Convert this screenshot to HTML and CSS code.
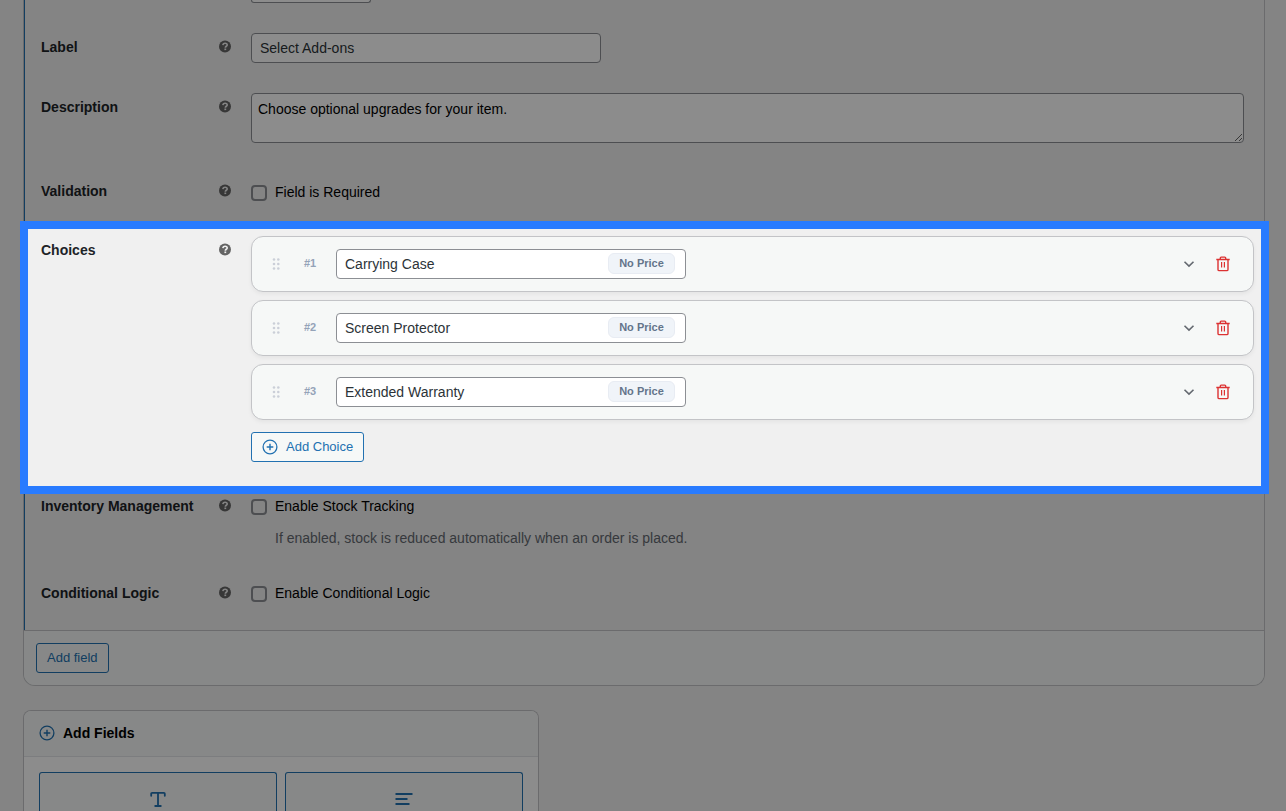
FILE: index.html
```
<!DOCTYPE html>
<html lang="en">
<head>
    <meta charset="UTF-8">
    <meta name="viewport" content="width=device-width, initial-scale=1.0">
    <title>Edit Product Fields</title>
    <link rel="stylesheet" href="styles.css">
</head>
<body>
    <svg class="sprite" width="0" height="0">
        <symbol id="help" viewBox="0 0 13 13">
            <circle cx="6" cy="6.5" r="6" fill="#646464"/>
            <path d="M3.9 5.1C4 3.8 4.8 3.2 6.1 3.2c1.3 0 2.1.7 2.1 1.7 0 1.3-1.9 1.4-1.9 2.8" fill="none" stroke="#f0f0f0" stroke-width="1.6"/>
            <rect x="5.4" y="8.5" width="1.8" height="1.6" fill="#f0f0f0"/>
        </symbol>
        <symbol id="grip" viewBox="0 0 8 14">
            <g fill="#cbcfd8">
                <circle cx="2" cy="2.5" r="1.3"/><circle cx="6.3" cy="2.5" r="1.3"/>
                <circle cx="2" cy="7" r="1.3"/><circle cx="6.3" cy="7" r="1.3"/>
                <circle cx="2" cy="11.5" r="1.3"/><circle cx="6.3" cy="11.5" r="1.3"/>
            </g>
        </symbol>
        <symbol id="chevron" viewBox="0 0 12 12">
            <path d="M1.5 3.7 6 8.1 10.5 3.7" fill="none" stroke="#646970" stroke-width="1.6"/>
        </symbol>
        <symbol id="trash" viewBox="0 0 14 16">
            <path d="M.3 3.5h13.4M4.3 3.3V2c0-.6.3-.9.9-.9h3.6c.6 0 .9.3.9.9v1.3M2 4v9.4c0 .8.5 1.2 1.2 1.2h7.6c.7 0 1.2-.4 1.2-1.2V4" fill="none" stroke="#dc3232" stroke-width="1.4"/>
            <path d="M5.6 6v5.6M8.4 6v5.6" fill="none" stroke="#dc3232" stroke-width="1.2"/>
        </symbol>
        <symbol id="plus" viewBox="0 0 16 16">
            <circle cx="8" cy="8" r="6.9" fill="none" stroke="#2271b1" stroke-width="1.3"/>
            <path d="M8 4.7v6.6M4.7 8h6.6" stroke="#2271b1" stroke-width="1.4"/>
        </symbol>
    </svg>

    <main class="page">
        <section class="panel">
            <div class="fields">
                <div class="row row-type">
                    <div class="control"><div class="select"></div></div>
                </div>
                <div class="row row-label">
                    <div class="label">Label <svg class="help"><use href="#help"/></svg></div>
                    <div class="control"><input type="text" class="text-input" value="Select Add-ons"></div>
                </div>
                <div class="row row-description">
                    <div class="label">Description <svg class="help"><use href="#help"/></svg></div>
                    <div class="control"><textarea class="textarea">Choose optional upgrades for your item.</textarea></div>
                </div>
                <div class="row row-validation">
                    <div class="label">Validation <svg class="help"><use href="#help"/></svg></div>
                    <label class="check"><input type="checkbox">Field is Required</label>
                </div>
                <div class="row row-choices">
                    <div class="label">Choices <svg class="help"><use href="#help"/></svg></div>
                    <div class="choices">
                        <div class="choice">
                            <svg class="grip"><use href="#grip"/></svg>
                            <span class="number">#1</span>
                            <div class="choice-name"><input type="text" value="Carrying Case"><span class="price">No Price</span></div>
                            <svg class="chevron"><use href="#chevron"/></svg>
                            <svg class="trash"><use href="#trash"/></svg>
                        </div>
                        <div class="choice">
                            <svg class="grip"><use href="#grip"/></svg>
                            <span class="number">#2</span>
                            <div class="choice-name"><input type="text" value="Screen Protector"><span class="price">No Price</span></div>
                            <svg class="chevron"><use href="#chevron"/></svg>
                            <svg class="trash"><use href="#trash"/></svg>
                        </div>
                        <div class="choice">
                            <svg class="grip"><use href="#grip"/></svg>
                            <span class="number">#3</span>
                            <div class="choice-name"><input type="text" value="Extended Warranty"><span class="price">No Price</span></div>
                            <svg class="chevron"><use href="#chevron"/></svg>
                            <svg class="trash"><use href="#trash"/></svg>
                        </div>
                        <button type="button" class="button add-choice"><svg class="plus"><use href="#plus"/></svg>Add Choice</button>
                    </div>
                    <div class="spotlight"></div>
                </div>
                <div class="row row-inventory">
                    <div class="label">Inventory Management <svg class="help"><use href="#help"/></svg></div>
                    <div class="control">
                        <label class="check"><input type="checkbox">Enable Stock Tracking</label>
                        <p class="hint">If enabled, stock is reduced automatically when an order is placed.</p>
                    </div>
                </div>
                <div class="row row-logic">
                    <div class="label">Conditional Logic <svg class="help"><use href="#help"/></svg></div>
                    <label class="check"><input type="checkbox">Enable Conditional Logic</label>
                </div>
            </div>
            <div class="panel-footer">
                <button type="button" class="button">Add field</button>
            </div>
        </section>

        <section class="add-fields">
            <h2><svg class="plus"><use href="#plus"/></svg>Add Fields</h2>
            <div class="field-types">
                <button type="button" class="field-type">
                    <svg width="16" height="17" viewBox="0 0 16 17"><path d="M1.2 4.8V2.8c0-.6.3-.9.9-.9h11.8c.6 0 .9.3.9.9v2M8 1.9v13M5.2 15h5.6" fill="none" stroke="#2271b1" stroke-width="1.8" stroke-linecap="round"/></svg>
                </button>
                <button type="button" class="field-type">
                    <svg width="18" height="17" viewBox="0 0 18 17"><path d="M.5 3h17M.5 8h12M.5 13h14" fill="none" stroke="#2271b1" stroke-width="2"/></svg>
                </button>
            </div>
        </section>
    </main>
</body>
</html>
```
FILE: styles.css
```
* {
    box-sizing: border-box;
}
body {
    margin: 0;
    background-color: #f0f0f0;
    font-family: "Liberation Sans", Arial, sans-serif;
    font-size: 14px;
    line-height: 20px;
    color: #000;
}
.sprite {
    display: block;
}
input,
textarea,
button {
    font-family: inherit;
    font-size: 14px;
    margin: 0;
}
svg {
    display: block;
    flex: none;
}
.page {
    height: 811px;
    padding: 0 21px 0 23px;
    overflow: hidden;
}
.panel {
    border: 1px solid #c3c4c7;
    border-top: none;
    border-radius: 0 0 12px 12px;
}
.fields {
    height: 630px;
    border-left: 1px solid #2271b1;
    padding-left: 16px;
}
.row {
    display: flex;
}
.row-type {
    height: 33px;
    padding-left: 210px;
}
.row-label {
    height: 60px;
}
.row-description {
    height: 88px;
}
.row-validation {
    height: 48px;
}
.row-choices {
    position: relative;
    height: 257px;
    padding-top: 7px;
}
.row-inventory {
    height: 97px;
    padding-top: 10px;
}
.label {
    display: flex;
    justify-content: space-between;
    width: 190px;
    margin-right: 20px;
    padding-top: 4px;
    font-weight: bold;
    color: #1d2327;
}
.row-validation .label,
.row-inventory .label,
.row-logic .label {
    padding-top: 0;
}
.row-validation .check {
    margin-top: 1px;
}
.help {
    width: 13px;
    height: 13px;
    margin: 3px -0.5px 0 0;
}
.control {
    flex: 1;
}
.select {
    width: 120px;
    height: 3px;
    border: 1px solid #8c8f94;
    border-top: none;
    border-radius: 0 0 3px 3px;
    background-color: #fff;
}
.text-input,
.choice-name input {
    display: block;
    width: 350px;
    height: 30px;
    padding: 0 8px;
    border: 1px solid #8c8f94;
    border-radius: 4px;
    background-color: #fff;
    color: #2c3338;
}
.textarea {
    display: block;
    width: 993px;
    height: 50px;
    padding: 5px 6px;
    border: 1px solid #8c8f94;
    border-radius: 4px;
    background-color: #fff;
    line-height: 20px;
    color: #000;
}
.check {
    display: flex;
    align-items: flex-start;
    height: 20px;
}
.check input {
    appearance: none;
    width: 16px;
    height: 16px;
    margin: 3px 8px 0 0;
    border: 2px solid #8c8f94;
    border-radius: 4px;
}
.hint {
    margin: 12px 0 0 24px;
    color: #646970;
}
.choices {
    width: 1003px;
}
.choice {
    display: flex;
    align-items: center;
    height: 56px;
    margin-bottom: 8px;
    padding: 0 23px 0 20px;
    border: 1px solid #c3c4c7;
    border-radius: 12px;
    background-color: #f6f8f7;
    box-shadow: 0 2px 4px rgba(0, 0, 0, 0.05);
}
.grip {
    width: 8px;
    height: 14px;
}
.number {
    width: 32px;
    margin: -2px 0 0 24px;
    font-size: 11px;
    font-weight: bold;
    color: #94a3b8;
}
.choice-name {
    position: relative;
    margin-right: auto;
}
.price {
    position: absolute;
    top: 4px;
    right: 11px;
    width: 67px;
    height: 21px;
    border: 1px solid #e8ecf3;
    border-radius: 6px;
    background-color: #f0f4f9;
    font-size: 11px;
    line-height: 19px;
    font-weight: bold;
    text-align: center;
    color: #64748b;
}
.chevron {
    width: 12px;
    height: 12px;
    margin-right: 21px;
}
.trash {
    width: 14px;
    height: 16px;
}
.button {
    display: flex;
    align-items: center;
    height: 30px;
    padding: 0 10px 2px;
    border: 1px solid #2271b1;
    border-radius: 3px;
    background-color: #f6f8f7;
    font-size: 13px;
    color: #2271b1;
}
.add-choice {
    margin-top: 12px;
}
.plus {
    width: 16px;
    height: 16px;
    margin-right: 8px;
}
.add-choice .plus {
    margin-top: 2px;
}
/* dims everything outside the highlighted row */
.spotlight {
    position: absolute;
    top: -8px;
    left: -21px;
    width: 1249px;
    height: 273px;
    border: 8px solid #287bff;
    box-shadow: 0 0 0 2000px rgba(0, 0, 0, 0.45);
    pointer-events: none;
}
.panel-footer {
    height: 55px;
    padding: 12px;
    border-top: 1px solid #c3c4c7;
    border-radius: 0 0 11px 11px;
    background-color: #f6f8f7;
}
.add-fields {
    width: 516px;
    height: 101px;
    margin-top: 24px;
    border: 1px solid #c3c4c7;
    border-bottom: none;
    border-radius: 8px 8px 0 0;
    background-color: #fff;
}
.add-fields h2 {
    display: flex;
    align-items: center;
    height: 46px;
    margin: 0;
    padding: 0 15px 1px;
    border-bottom: 1px solid #e2e4e7;
    border-radius: 7px 7px 0 0;
    background-color: #f6f8f7;
    font-size: 14px;
}
.field-types {
    display: flex;
    gap: 8px;
    padding: 15px 15px 0;
}
.field-type {
    display: flex;
    justify-content: center;
    flex: 1;
    height: 39px;
    padding: 18px 0 0;
    border: 1px solid #2271b1;
    border-bottom: none;
    border-radius: 3px 3px 0 0;
    background-color: #f6f8f7;
}
```
